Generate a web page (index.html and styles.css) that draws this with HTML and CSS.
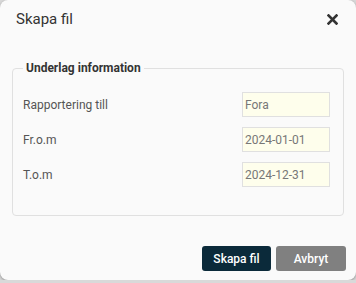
FILE: index.html
```html
<!DOCTYPE html>
<html lang="sv">

<head>
    <meta charset="UTF-8">
    <meta name="viewport" content="width=device-width, initial-scale=1.0">
    <title>Skapa fil</title>
    <link rel="stylesheet" href="styles.css">
</head>

<body>
    <div class="dialog">
        <div class="dialog-header">
            <span class="dialog-title">Skapa fil</span>
            <button class="close-btn" aria-label="Stäng">
                <svg width="11" height="11" viewBox="0 0 11 11">
                    <path d="M1.5 1.5 L9.5 9.5 M9.5 1.5 L1.5 9.5" stroke="#333" stroke-width="2.6" stroke-linecap="square" />
                </svg>
            </button>
        </div>

        <fieldset class="info">
            <legend>Underlag information</legend>
            <div class="row">
                <label>Rapportering till</label>
                <input type="text" value="Fora" readonly>
            </div>
            <div class="row">
                <label>Fr.o.m</label>
                <input type="text" value="2024-01-01" readonly>
            </div>
            <div class="row">
                <label>T.o.m</label>
                <input type="text" value="2024-12-31" readonly>
            </div>
        </fieldset>

        <div class="dialog-footer">
            <button class="btn btn-primary">Skapa fil</button>
            <button class="btn btn-secondary">Avbryt</button>
        </div>
    </div>
</body>

</html>
```

FILE: styles.css
```css
body {
    margin: 0;
    background: #d9d9d9;
    font-family: Roboto, "Liberation Sans", sans-serif;
}

.dialog {
    height: 280px;
    background: #fafafa;
    border-radius: 8px;
    box-shadow: 0 1px 3px rgba(0, 0, 0, 0.35);
    display: flex;
    flex-direction: column;
}

.dialog-header {
    display: flex;
    justify-content: space-between;
    align-items: center;
    height: 38px;
    padding: 0 18px 0 16px;
}

.dialog-title {
    font-size: 15px;
    color: #333;
}

.close-btn {
    border: none;
    background: none;
    padding: 0;
    display: flex;
    cursor: pointer;
}

.info {
    margin: 23px 12px 0;
    padding: 17px 13px 28px 10px;
    border: 1px solid #e0e0e0;
    border-radius: 4px;
    display: flex;
    flex-direction: column;
    gap: 10px;
}

.info legend {
    padding: 0 3px;
    font-size: 12px;
    font-weight: bold;
    color: #333;
    line-height: 14px;
}

.row {
    display: flex;
    justify-content: space-between;
    align-items: center;
}

.row label {
    font-size: 12px;
    color: #555;
}

.row input {
    box-sizing: border-box;
    width: 88px;
    height: 25px;
    padding: 0 2px;
    border: 1px solid #e0e0e0;
    background: #fefeec;
    font-family: inherit;
    font-size: 12px;
    color: #777;
    outline: none;
}

.dialog-footer {
    margin-top: auto;
    display: flex;
    justify-content: flex-end;
    gap: 5px;
    padding: 0 10px 9px;
}

.btn {
    height: 25px;
    border: none;
    border-radius: 3px;
    color: #fff;
    font-family: inherit;
    font-size: 12px;
    font-weight: 500;
    cursor: pointer;
}

.btn-primary {
    width: 69px;
    background: #0b2a3a;
}

.btn-secondary {
    width: 70px;
    background: #808080;
}
```
